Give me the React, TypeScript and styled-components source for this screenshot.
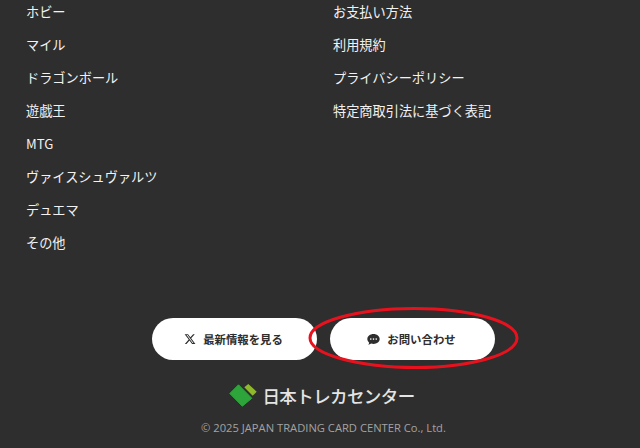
import React from "react";
import styled, { createGlobalStyle } from "styled-components";

const GlobalStyle = createGlobalStyle`
  html, body {
    margin: 0;
    padding: 0;
    background: #2e2e2e;
    overflow: hidden;
  }
  body {
    font-family: "Noto Sans CJK JP", "Noto Sans", sans-serif;
  }
`;

const leftLinks = [
  "ホビー",
  "マイル",
  "ドラゴンボール",
  "遊戯王",
  "MTG",
  "ヴァイスシュヴァルツ",
  "デュエマ",
  "その他",
];

const rightLinks = [
  "お支払い方法",
  "利用規約",
  "プライバシーポリシー",
  "特定商取引法に基づく表記",
];

const App: React.FC = () => {
  return (
    <>
      <GlobalStyle />
      <Footer>
        <Columns>
          <LinkList>
            {leftLinks.map((link) => (
              <LinkItem key={link}>{link}</LinkItem>
            ))}
          </LinkList>
          <LinkList>
            {rightLinks.map((link) => (
              <LinkItem key={link}>{link}</LinkItem>
            ))}
          </LinkList>
        </Columns>

        <Buttons>
          <PillButton>
            <svg width="12" height="12" viewBox="0 0 24 24" fill="#2e2e2e">
              <path d="M18.244 2.25h3.308l-7.227 8.26 8.502 11.24H16.17l-5.214-6.817L4.99 21.75H1.68l7.73-8.835L1.254 2.25H8.08l4.713 6.231zm-1.161 17.52h1.833L7.084 4.126H5.117z" />
            </svg>
            最新情報を見る
          </PillButton>
          <ContactWrap>
            <PillButton>
              <svg width="13" height="13" viewBox="0 0 24 24">
                <path
                  fill="#2e2e2e"
                  d="M12 2C5.6 2 .6 6.1.6 11.2c0 2.6 1.3 4.9 3.4 6.6-.2 1.5-1 2.8-2 3.9 2.2-.2 4.2-1 5.7-2.2 1.3.4 2.8.7 4.3.7 6.4 0 11.4-4 11.4-9S18.400 2 12 2z"
                />
                <circle cx="7" cy="11.200" r="1.500" fill="#fff" />
                <circle cx="12" cy="11.200" r="1.500" fill="#fff" />
                <circle cx="17" cy="11.200" r="1.500" fill="#fff" />
              </svg>
              お問い合わせ
            </PillButton>
            <Annotation viewBox="0 0 212 63" width="212" height="63">
              <path
                d="M2 31C2 15 48 1.500 106 1.500C164 1.500 209 15 209 31C209 47 164 60.500 108 60.500C50 60.500 2 47 2 31z"
                fill="none"
                stroke="#e8121f"
                strokeWidth="3"
              />
            </Annotation>
          </ContactWrap>
        </Buttons>

        <Brand>
          <svg width="28" height="23" viewBox="0 0 28 23">
            <polygon
              points="0.800,9.500 9.500,0.800 22.800,14.300 13.300,22.200"
              fill="#2ea53a"
              stroke="#2ea53a"
              strokeWidth="1"
              strokeLinejoin="round"
            />
            <polygon
              points="15.300,3.300 19.300,0 27.700,7.700 23.700,11.700"
              fill="#8fb82c"
            />
          </svg>
          <BrandName>日本トレカセンター</BrandName>
        </Brand>

        <Copyright>© 2025 JAPAN TRADING CARD CENTER Co., Ltd.</Copyright>
      </Footer>
    </>
  );
};

const Footer = styled.footer`
  width: 640px;
  height: 448px;
  background: #2e2e2e;
  display: flex;
  flex-direction: column;
  overflow: hidden;
`;

const Columns = styled.div`
  display: grid;
  grid-template-columns: 307px 1fr;
  padding-left: 26px;
  height: 318px;
`;

const LinkList = styled.ul`
  list-style: none;
  margin: 0;
  padding: 0;
  display: flex;
  flex-direction: column;
  gap: 13px;
`;

const LinkItem = styled.li`
  height: 20px;
  line-height: 23px;
  font-size: 13.200px;
  color: #f2f2f2;
  white-space: nowrap;
`;

const Buttons = styled.div`
  display: flex;
  justify-content: center;
  gap: 13px;
  padding-left: 7px;
`;

const ContactWrap = styled.div`
  position: relative;
`;

const PillButton = styled.div`
  width: 165px;
  height: 42px;
  border-radius: 21px;
  background: #fff;
  color: #2e2e2e;
  font-size: 11.400px;
  font-weight: 700;
  display: flex;
  align-items: center;
  justify-content: center;
  gap: 7px;
  padding-right: 2px;
  box-sizing: border-box;
`;

const Annotation = styled.svg`
  position: absolute;
  left: -22px;
  top: -11px;
  pointer-events: none;
`;

const Brand = styled.div`
  display: flex;
  align-items: center;
  justify-content: center;
  gap: 5px;
  margin-top: 18px;
  padding-left: 4px;
  height: 34px;
`;

const BrandName = styled.span`
  font-size: 17.500px;
  font-weight: 500;
  letter-spacing: -0.6px;
  color: #e4e4e4;
`;

const Copyright = styled.p`
  margin: 8px 0 0;
  padding-left: 7px;
  text-align: center;
  font-family: "Open Sans", "Noto Sans", sans-serif;
  font-size: 11.200px;
  line-height: 16px;
  color: #a3a3a3;
`;

export default App;
